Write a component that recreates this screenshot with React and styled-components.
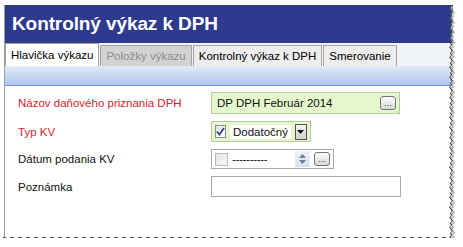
import React from 'react'
import styled, { createGlobalStyle } from 'styled-components'

const GlobalStyle = createGlobalStyle`
    body {
        margin: 0;
        background: #ffffff;
        font-family: "Liberation Sans", Arial, sans-serif;
    }
`

const Frame = styled.div`
    position: relative;
    margin: 5px 0 0 4px;
    width: 448px;
    height: 233px;
    border-left: 1px solid #9c9c9c;
    background: #ffffff;
`
const TitleBar = styled.div`
    height: 38px;
    background: #2e3a8e;
    color: #ffffff;
    display: flex;
    align-items: center;
    padding-left: 7px;
    font-size: 19px;
    font-weight: 700;
    letter-spacing: -0.1px;
`
const TabRow = styled.div`
    height: 23px;
    background: #f1f4f9;
    display: flex;
    align-items: flex-end;
    gap: 1px;
`
const Tab = styled.div`
    box-sizing: border-box;
    padding: 0 5px;
    display: flex;
    align-items: center;
    font-size: 11.5px;
    border: 1px solid #a3a3a3;
    border-bottom: none;
    background: ${p => p.$active ? '#ffffff' : p.$disabled ? '#d3d3d3' : '#ededed'};
    color: ${p => p.$disabled ? '#8c8c8c' : '#000000'};
    height: ${p => p.$active ? '23px' : '21px'};
`
const Band = styled.div`
    height: 19px;
    background: linear-gradient(#e2eaf9, #adc6ee);
    border-bottom: 1px solid #7a98cc;
`
const Form = styled.div`
    display: grid;
    grid-template-columns: 193px auto;
    row-gap: 7px;
    padding: 6px 0 0 13px;
    align-items: center;
`
const Label = styled.div`
    font-size: 11.5px;
    color: ${p => p.$required ? '#d8232a' : '#111111'};
`
const Field = styled.div`
    box-sizing: border-box;
    height: ${p => p.$h || 20}px;
    width: ${p => p.$w}px;
    border: 1px solid ${p => p.$green ? '#b7c9a0' : '#a9a9a9'};
    background: ${p => p.$green ? '#e4f7cd' : '#ffffff'};
    display: flex;
    align-items: center;
    padding: 0 3px;
    gap: 4px;
    font-size: 11.5px;
    color: #111111;
`
const FieldText = styled.div`
    flex: 1;
    padding-left: 2px;
`
const Ellipsis = styled.div`
    width: 16px;
    height: 14px;
    box-sizing: border-box;
    border: 1px solid #6f7770;
    border-radius: 3px;
    background: linear-gradient(#fbfbfb, #d9d9d9);
    font-size: 9px;
    line-height: 13px;
    text-align: center;
    color: #333333;
`
const Check = styled.div`
    width: 13px;
    height: 13px;
    box-sizing: border-box;
    border: 1px solid ${p => p.$disabled ? '#b9b9b9' : '#8c8c8c'};
    background: ${p => p.$disabled ? 'linear-gradient(135deg, #e3e3e3, #fafafa)' : 'linear-gradient(135deg, #dde2ea, #ffffff)'};
    display: flex;
    align-items: center;
    justify-content: center;
`
const ComboText = styled.div`
    background: #ffffff;
    padding: 1px 3px;
    font-size: 11.5px;
`
const DropButton = styled.div`
    width: 16px;
    height: 16px;
    box-sizing: border-box;
    border: 1px solid #505050;
    background: linear-gradient(#f4f4f4, #d0d0d0);
    display: flex;
    align-items: center;
    justify-content: center;
`
const Dashes = styled.div`
    flex: 1;
    letter-spacing: -0.3px;
`
const Spin = styled.div`
    width: 15px;
    height: 16px;
    display: flex;
    flex-direction: column;
    justify-content: center;
    align-items: center;
    gap: 2px;
    background: linear-gradient(#eef2f8, #d7dfeb);
`

const tornPath = () => {
    const w = 448, h = 233
    let d = `M ${w - 1} 0`
    for (let y = 2, i = 0; y < h; y += 2, i++) {
        const x = w - 1 + ((i * 7) % 5) * 0.7 - 1.4
        d += ` L ${x.toFixed(1)} ${y}`
    }
    for (let x = w - 1, i = 0; x > -2; x -= 2, i++) {
        const y = h + ((i * 3) % 4) * 0.7 - 1
        d += ` L ${x} ${y.toFixed(1)}`
    }
    return d
}

const Torn = styled.svg`
    position: absolute;
    left: -1px;
    top: 0;
    overflow: visible;
    pointer-events: none;
`
const Cover = styled.div`
    position: absolute;
    right: -10px;
    top: 0;
    width: 10px;
    height: 245px;
    background: #ffffff;
`
const CoverBottom = styled.div`
    position: absolute;
    left: -2px;
    bottom: -10px;
    width: 460px;
    height: 10px;
    background: #ffffff;
`

const App = () => {
    return (
        <>
            <GlobalStyle />
            <Frame>
                <TitleBar>Kontrolný výkaz k DPH</TitleBar>
                <TabRow>
                    <Tab $active>Hlavička výkazu</Tab>
                    <Tab $disabled>Položky výkazu</Tab>
                    <Tab>Kontrolný výkaz k DPH</Tab>
                    <Tab>Smerovanie</Tab>
                </TabRow>
                <Band />
                <Form>
                    <Label $required>Názov daňového priznania DPH</Label>
                    <Field $green $w={189} $h={22}>
                        <FieldText>DP DPH Február 2014</FieldText>
                        <Ellipsis>...</Ellipsis>
                    </Field>
                    <Label $required>Typ KV</Label>
                    <Field $green $w={100} $h={21}>
                        <Check>
                            <svg width="9" height="9" viewBox="0 0 9 9">
                                <path d="M1 4.5 L3.5 7.5 L8 1" fill="none" stroke="#34448f" strokeWidth="1.8" />
                            </svg>
                        </Check>
                        <ComboText>Dodatočný</ComboText>
                        <DropButton>
                            <svg width="7" height="4" viewBox="0 0 7 4">
                                <path d="M0 0 H7 L3.5 4 Z" fill="#111111" />
                            </svg>
                        </DropButton>
                    </Field>
                    <Label>Dátum podania KV</Label>
                    <Field $w={123} $h={20}>
                        <Check $disabled />
                        <Dashes>----------</Dashes>
                        <Spin>
                            <svg width="7" height="4" viewBox="0 0 7 4">
                                <path d="M0 4 H7 L3.5 0 Z" fill="#6e7f99" />
                            </svg>
                            <svg width="7" height="4" viewBox="0 0 7 4">
                                <path d="M0 0 H7 L3.5 4 Z" fill="#6e7f99" />
                            </svg>
                        </Spin>
                        <Ellipsis>...</Ellipsis>
                    </Field>
                    <Label>Poznámka</Label>
                    <Field $w={190} $h={21} />
                </Form>
                <Cover />
                <CoverBottom />
                <Torn width="450" height="240">
                    <path d={tornPath()} fill="none" stroke="#bbbbbb" strokeWidth="2" transform="translate(1.5 1.5)" />
                    <path d={tornPath()} fill="none" stroke="#3a3a3a" strokeWidth="1" />
                </Torn>
            </Frame>
        </>
    )
}

export default App
